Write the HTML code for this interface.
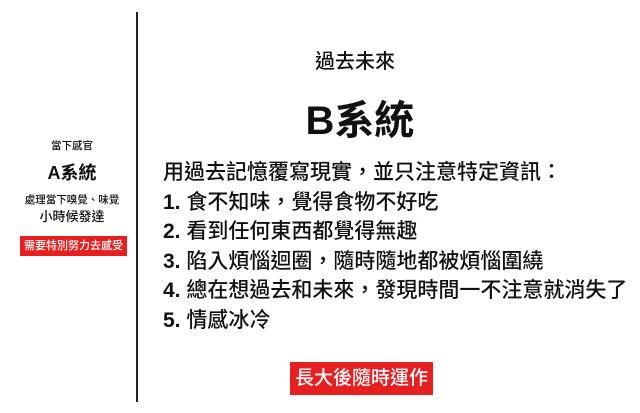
<!DOCTYPE html>
<html><head><meta charset="utf-8"><style>
body{margin:0;width:640px;height:413px;background:#fff;position:relative;overflow:hidden;font-family:"Liberation Sans","Noto Sans CJK TC",sans-serif;color:#111;font-weight:500}
.a{position:absolute;white-space:nowrap}
.c{text-align:center}
b{font-weight:bold}
</style></head><body>
<div class="a" style="left:136px;top:12px;width:2px;height:390px;background:#222"></div>
<div class="a c" style="left:0;width:144px;top:138px;font-size:10.5px">當下感官</div>
<div class="a c" style="left:0;width:144px;top:159px;font-size:18px;font-weight:bold">A系統</div>
<div class="a c" style="left:0;width:144px;top:192px;font-size:10.5px">處理當下嗅覺、味覺</div>
<div class="a c" style="left:0;width:144px;top:206px;font-size:13px">小時候發達</div>
<div class="a c" style="left:20px;width:107px;top:236px;height:20px;line-height:20px;background:#e62020;color:#fff;font-size:11px">需要特別努力去感受</div>
<div class="a c" style="left:255px;width:200px;top:45px;font-size:20px">過去未來</div>
<div class="a c" style="left:255px;width:210px;top:97px;font-size:40px;font-weight:bold;line-height:48px">B系統</div>
<div class="a" style="left:163px;top:158px;font-size:21px;line-height:29.5px">用過去記憶覆寫現實，並只注意特定資訊：<br><b>1.</b> 食不知味，覺得食物不好吃<br><b>2.</b> 看到任何東西都覺得無趣<br><b>3.</b> 陷入煩惱迴圈，隨時隨地都被煩惱圍繞<br><b>4.</b> 總在想過去和未來，發現時間一不注意就消失了<br><b>5.</b> 情感冰冷</div>
<div class="a c" style="left:290px;width:143px;top:362px;height:33px;line-height:33px;background:#e62020;color:#fff;font-size:19px">長大後隨時運作</div>
</body></html>
